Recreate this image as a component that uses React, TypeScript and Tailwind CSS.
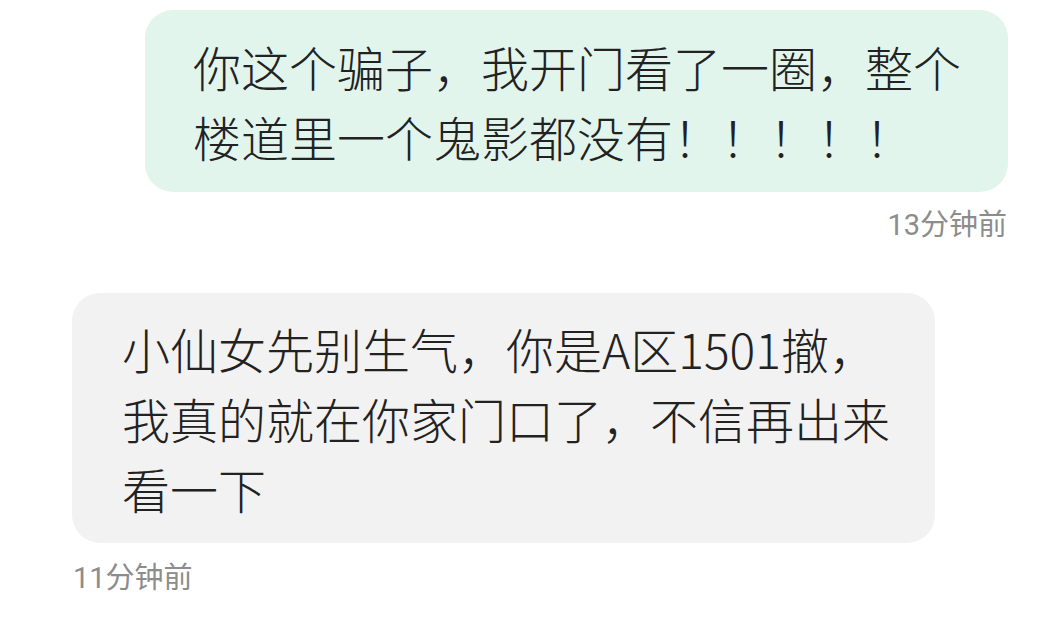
import React from 'react';

const cjk = { fontFamily: '"Noto Sans CJK SC", "Noto Sans", sans-serif' };
const stamp = { fontFamily: 'Roboto, "Noto Sans CJK SC", sans-serif' };

const App: React.FC = () => {
  return (
    <div className="w-[1058px] h-[622px] bg-white overflow-hidden" style={cjk}>
      <div className="flex flex-col pt-[10px]">
        <div className="self-end mr-[50px] w-[863px] bg-[#e2f5ed] rounded-[28px] pl-[48px] pr-[47px] py-[21px] text-[48px] leading-[70px] font-light text-[#222222]">
          你这个骗子，我开门看了一圈，整个楼道里一个鬼影都没有！！！！！
        </div>
        <div className="self-end mr-[51px] mt-[15px] text-[29px] leading-[36px] text-[#8c8c8c]" style={stamp}>
          13分钟前
        </div>

        <div className="self-start ml-[72px] mt-[50px] w-[863px] bg-[#f2f2f2] rounded-[28px] pl-[50px] pr-[45px] py-[20px] text-[48px] leading-[70px] font-light text-[#222222]">
          小仙女先别生气，你是A区1501撤，我真的就在你家门口了，不信再出来看一下
        </div>
        <div className="self-start ml-[73px] mt-[17px] text-[29px] leading-[36px] text-[#8c8c8c]" style={stamp}>
          11分钟前
        </div>
      </div>
    </div>
  );
};

export default App;
